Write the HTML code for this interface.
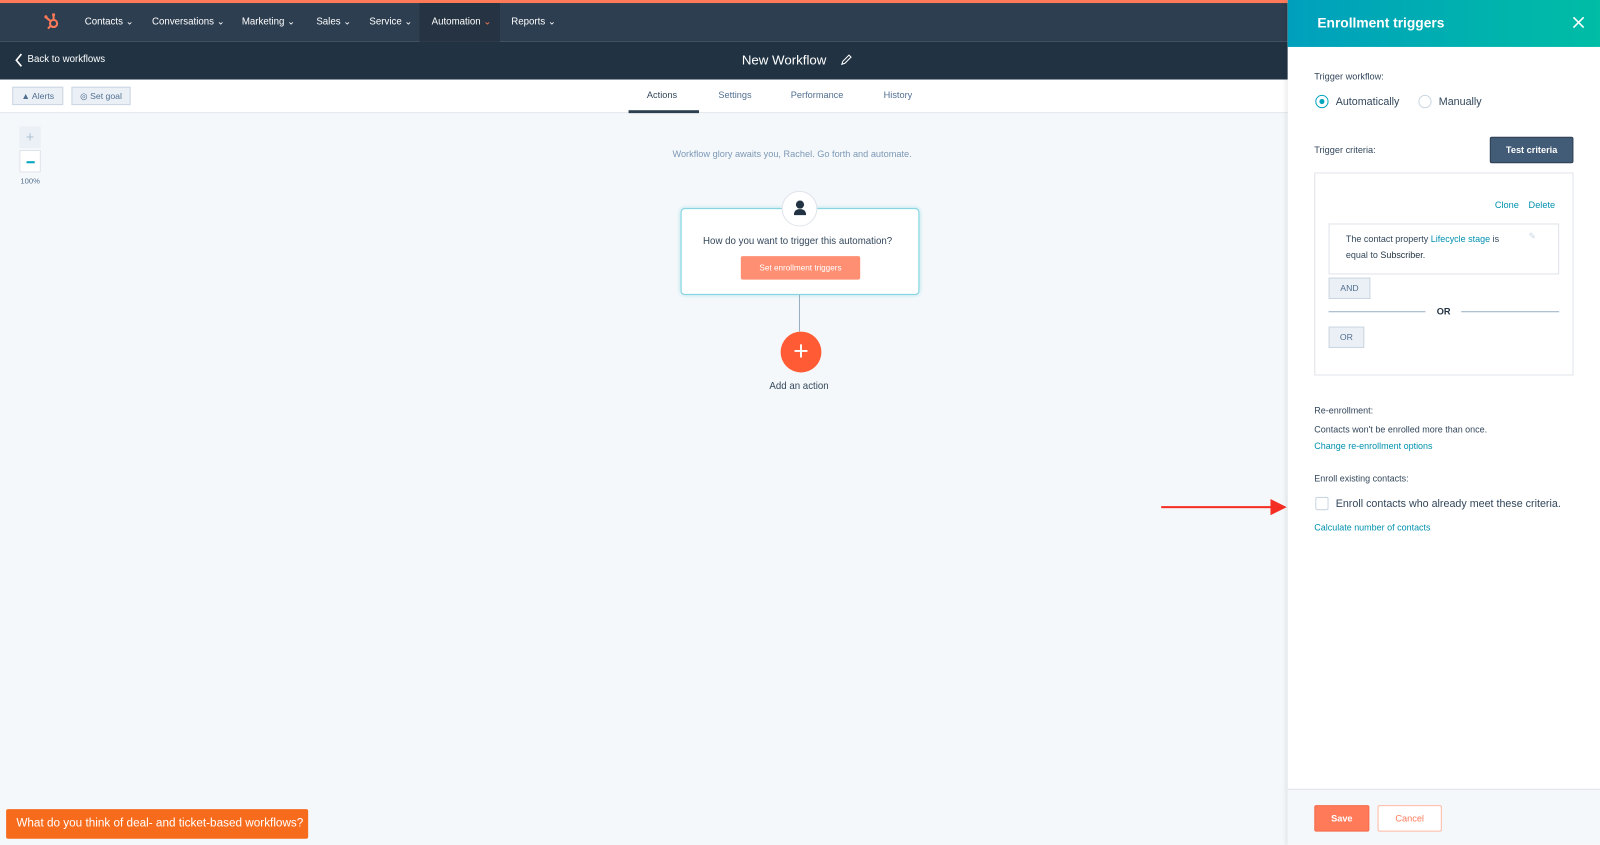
<!DOCTYPE html>
<html><head><meta charset="utf-8"><style>
*{box-sizing:border-box;margin:0;padding:0}
body{width:1600px;height:845px;overflow:hidden;font-family:"Liberation Sans",sans-serif;background:#f5f8fa;position:relative;color:#33475b}
#wrap{position:absolute;left:0;top:0;width:1568px;height:828px;transform:scale(1.0204);transform-origin:0 0}
.abs{position:absolute}
.nav{left:0;top:0;width:1262px;height:41px;background:#2d3e50;border-top:3px solid #ff7a59}
.nav span{position:absolute;top:13px;font-size:9.5px;color:#fff}
.sub{left:0;top:41px;width:1262px;height:37px;background:#213343}
.tabs{left:0;top:78px;width:1262px;height:33px;background:#fff;border-bottom:1px solid #dfe3eb}
.canvas{left:0;top:111px;width:1262px;height:717px;background:#f5f8fa}
.btn{position:absolute;border:1px solid #cbd6e2;background:#eaf0f6;font-size:8.5px;color:#516f90;text-align:center}
.panel{left:1262px;top:0;width:306px;height:828px;background:#fff;box-shadow:-2px 0 4px rgba(0,0,0,.08)}
.t{position:absolute;font-size:9px;color:#33475b;white-space:nowrap}
.link{color:#0091ae}
</style></head><body><div id="wrap">
<div class="abs nav">
 <svg class="abs" style="left:42px;top:9px" width="18" height="18" viewBox="0 0 18 18"><g stroke="#ff7a59" stroke-width="2" fill="none"><circle cx="10.5" cy="11" r="3.5"/><path d="M10.5 7.5V3M8 9 3 5M8 13l-3 3"/></g><circle cx="10.5" cy="2.5" r="1.5" fill="#ff7a59"/><circle cx="3" cy="4.5" r="1.5" fill="#ff7a59"/></svg>
 <div class="abs" style="left:411px;top:0;width:79px;height:38px;background:#253342"></div>
 <span style="left:83px">Contacts ⌄</span><span style="left:149px">Conversations ⌄</span><span style="left:237px">Marketing ⌄</span><span style="left:310px">Sales ⌄</span><span style="left:362px">Service ⌄</span><span style="left:423px">Automation <b style="color:#ff7a59;font-weight:normal">⌄</b></span><span style="left:501px">Reports ⌄</span>
</div>
<div class="abs sub">
 <svg class="abs" style="left:14px;top:11px" width="9" height="14" viewBox="0 0 9 14"><path d="M7 1 2 7l5 6" stroke="#fff" stroke-width="1.6" fill="none"/></svg>
 <div class="abs" style="left:27px;top:12px;font-size:9.5px;color:#fff">Back to workflows</div>
 <div class="abs" style="left:727px;top:10px;font-size:13px;color:#fff">New Workflow</div>
 <svg class="abs" style="left:824px;top:12px" width="11" height="11" viewBox="0 0 11 11"><path d="M1 10l1-3 6-6 2 2-6 6z" stroke="#fff" fill="none"/></svg>
</div>
<div class="abs tabs">
 <div class="btn" style="left:12px;top:7px;width:50px;height:18px;line-height:16px">▲ Alerts</div>
 <div class="btn" style="left:70px;top:7px;width:58px;height:18px;line-height:16px">◎ Set goal</div>
 <div class="t" style="left:634px;top:10px;color:#33475b">Actions</div>
 <div class="abs" style="left:616px;top:30px;width:69px;height:3px;background:#2d3e50"></div>
 <div class="t" style="left:704px;top:10px;color:#516f90">Settings</div>
 <div class="t" style="left:775px;top:10px;color:#516f90">Performance</div>
 <div class="t" style="left:866px;top:10px;color:#516f90">History</div>
</div>
<div class="abs canvas">
 <div class="abs" style="left:19px;top:13px;width:21px;height:21px;background:#eaf0f6;color:#b0c1d4;text-align:center;font-size:14px;line-height:20px">+</div>
 <div class="abs" style="left:19px;top:36px;width:21px;height:22px;background:#fff;border:1px solid #dfe3eb"><div class="abs" style="left:6px;top:10px;width:8px;height:2px;background:#00a4bd"></div></div>
 <div class="t" style="left:20px;top:62px;font-size:7.5px;color:#516f90">100%</div>
 <div class="t" style="left:659px;top:35px;color:#7c98b6">Workflow glory awaits you, Rachel. Go forth and automate.</div>
 <div class="abs" style="left:667px;top:93px;width:234px;height:85px;background:#fff;border:1.5px solid #7fd1de;border-radius:4px;box-shadow:0 0 4px #a6e0ea"></div>
 <div class="abs" style="left:766px;top:76px;width:35px;height:35px;border-radius:50%;background:#fff;border:1px solid #dfe3eb"><svg style="position:absolute;left:11px;top:8px" width="12" height="15" viewBox="0 0 12 15"><circle cx="6" cy="4.5" r="4" fill="#213343"/><path d="M0 15c0-5 3-6 6-6s6 1 6 6z" fill="#213343"/></svg></div>
 <div class="t" style="left:689px;top:120px;font-size:9.5px">How do you want to trigger this automation?</div>
 <div class="abs" style="left:726px;top:140px;width:117px;height:23px;background:#ff8f73;border-radius:2px;color:#fff;font-size:8px;text-align:center;line-height:23px">Set enrollment triggers</div>
 <div class="abs" style="left:783px;top:178px;width:1px;height:36px;background:#99afc4"></div>
 <div class="abs" style="left:765px;top:214px;width:40px;height:40px;border-radius:50%;background:#ff5c35;color:#fff;text-align:center;font-size:26px;line-height:38px;font-weight:300">+</div>
 <div class="t" style="left:754px;top:262px;font-size:9.5px">Add an action</div>
 <div class="abs" style="left:6px;top:682px;width:296px;height:29px;background:#f76b1c;border-radius:2px;color:#fff;font-size:11.5px;line-height:29px;padding-left:10px;white-space:nowrap">What do you think of deal- and ticket-based workflows?</div>
</div>
<div class="abs" style="left:1138px;top:496px;width:110px;height:2px;background:#f42e22"></div>
<svg class="abs" style="left:1245px;top:489px" width="16" height="16" viewBox="0 0 16 16"><path d="M0 0 16 8 0 16z" fill="#f42e22"/></svg>
<div class="abs panel">
 <div class="abs" style="left:0;top:0;width:306px;height:46px;background:linear-gradient(90deg,#00a0bd,#00bda5)"></div>
 <div class="abs" style="left:29px;top:15px;font-size:13.5px;font-weight:bold;color:#fff">Enrollment triggers</div>
 <svg class="abs" style="left:279px;top:16px" width="12" height="12" viewBox="0 0 12 12"><path d="M1 1l10 10M11 1 1 11" stroke="#fff" stroke-width="1.6"/></svg>
 <div class="t" style="left:26px;top:70px">Trigger workflow:</div>
 <div class="abs" style="left:27px;top:93px;width:13px;height:13px;border-radius:50%;border:1.5px solid #00a4bd"><div class="abs" style="left:2.5px;top:2.5px;width:5px;height:5px;border-radius:50%;background:#00a4bd"></div></div>
 <div class="t" style="left:47px;top:94px;font-size:10.5px">Automatically</div>
 <div class="abs" style="left:128px;top:93px;width:13px;height:13px;border-radius:50%;border:1px solid #cbd6e2"></div>
 <div class="t" style="left:148px;top:94px;font-size:10.5px">Manually</div>
 <div class="t" style="left:26px;top:142px">Trigger criteria:</div>
 <div class="abs" style="left:198px;top:134px;width:82px;height:26px;background:#425b76;border:1px solid #2d3e50;border-radius:2px;color:#fff;font-size:9px;font-weight:bold;text-align:center;line-height:24px">Test criteria</div>
 <div class="abs" style="left:26px;top:169px;width:254px;height:199px;border:1px solid #dfe3eb"></div>
 <div class="t link" style="left:203px;top:196px">Clone</div><div class="t link" style="left:236px;top:196px">Delete</div>
 <div class="abs" style="left:40px;top:219px;width:226px;height:50px;border:1px solid #dfe3eb"></div>
 <div class="t" style="left:57px;top:226px;font-size:8.8px;line-height:16px">The contact property <span class="link">Lifecycle stage</span> is<br>equal to <span style="color:#213343">Subscriber</span>.</div>
 <div class="t" style="left:236px;top:226px;color:#cbd6e2">✎</div>
 <div class="btn" style="left:40px;top:272px;width:41px;height:21px;line-height:19px">AND</div>
 <div class="abs" style="left:40px;top:305px;width:95px;height:1px;background:#99afc4"></div>
 <div class="t" style="left:146px;top:300px;font-weight:bold;color:#213343">OR</div>
 <div class="abs" style="left:170px;top:305px;width:96px;height:1px;background:#99afc4"></div>
 <div class="btn" style="left:40px;top:320px;width:35px;height:21px;line-height:19px">OR</div>
 <div class="t" style="left:26px;top:397px;font-size:8.8px">Re-enrollment:</div>
 <div class="t" style="left:26px;top:416px;font-size:8.8px">Contacts won't be enrolled more than once.</div>
 <div class="t link" style="left:26px;top:432px;font-size:8.8px">Change re-enrollment options</div>
 <div class="t" style="left:26px;top:464px;font-size:8.8px">Enroll existing contacts:</div>
 <div class="abs" style="left:27px;top:487px;width:13px;height:13px;border:1px solid #cbd6e2;border-radius:2px"></div>
 <div class="t" style="left:47px;top:488px;font-size:10.5px">Enroll contacts who already meet these criteria.</div>
 <div class="t link" style="left:26px;top:512px;font-size:8.8px">Calculate number of contacts</div>
 <div class="abs" style="left:0;top:773px;width:306px;height:55px;background:#f5f8fa;border-top:1px solid #dfe3eb"></div>
 <div class="abs" style="left:26px;top:789px;width:54px;height:26px;background:#ff7a59;border:1px solid #f56b48;border-radius:2px;color:#fff;font-size:9px;font-weight:bold;text-align:center;line-height:24px">Save</div>
 <div class="abs" style="left:88px;top:789px;width:63px;height:26px;background:#fff;border:1px solid #ffb8a5;border-radius:2px;color:#ff7a59;font-size:9px;text-align:center;line-height:24px">Cancel</div>
</div>
</div></body></html>
